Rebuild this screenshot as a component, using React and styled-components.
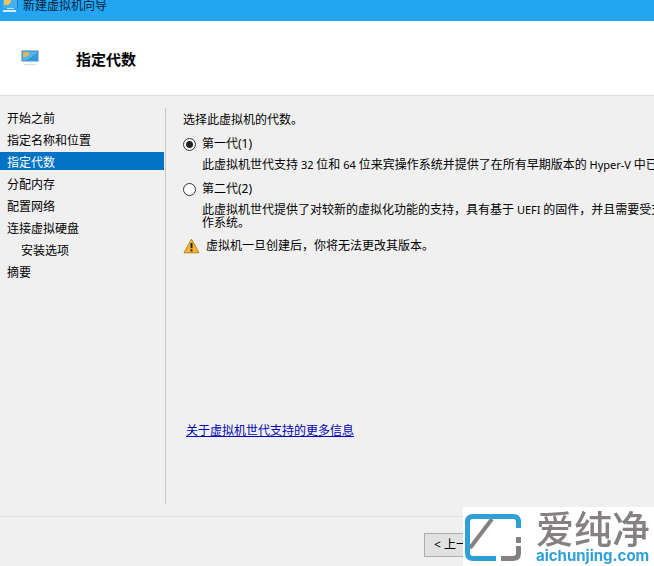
import { useState } from 'react'
import styled, { createGlobalStyle } from 'styled-components'

const GlobalStyle = createGlobalStyle`
  * {
    box-sizing: border-box;
  }
  body {
    margin: 0;
    background: #f0f0f0;
    color: #000;
    font-family: 'Noto Sans', 'Noto Sans CJK SC', sans-serif;
    font-size: 12px;
    line-height: 18px;
  }
`

const Wizard = styled.div`
  display: flex;
  flex-direction: column;
  min-height: 100vh;
  overflow: hidden;
`

const TitleBar = styled.div`
  display: flex;
  align-items: flex-start;
  gap: 4px;
  height: 21px;
  padding-left: 2px;
  overflow: hidden;
  background: #23a5f2;
  color: #06233c;
  line-height: 12px;
  svg {
    flex: none;
  }
`

const Header = styled.header`
  display: flex;
  align-items: center;
  gap: 37px;
  height: 75px;
  padding-left: 21px;
  background: #fff;
  border-bottom: 1px solid #dcdcdc;
  h1 {
    margin: 0;
    padding-top: 2px;
    font-size: 15px;
    line-height: 22px;
    font-weight: 700;
  }
`

const Body = styled.div`
  display: flex;
  flex: 1;
  padding: 12px 0;
`

const Steps = styled.nav`
  flex: none;
  width: 166px;
  padding-right: 1px;
  border-right: 1px solid #c6c6c6;
  ul {
    display: grid;
    gap: 4px;
    margin: 0;
    padding: 0;
    list-style: none;
  }
`

const Step = styled.a`
  display: block;
  padding-top: 4px;
  padding-left: ${props => (props.$nested ? 21 : 7)}px;
  background: ${props => (props.$current ? '#0173c2' : 'transparent')};
  color: ${props => (props.$current ? '#fff' : '#000')};
  line-height: 14px;
  text-decoration: none;
`

const Content = styled.main`
  display: flex;
  flex-direction: column;
  flex: 1;
  min-width: 0;
  padding: 3px 0 64px 17px;
  p {
    margin: 0;
  }
`

const Option = styled.div`
  display: grid;
  grid-template-columns: 13px 1fr;
  column-gap: 6px;
  align-items: center;
  padding: 6px 0 3px;
`

const Radio = styled.input`
  appearance: none;
  width: 13px;
  height: 13px;
  margin: 0;
  border: 1px solid #333;
  border-radius: 50%;
  background: #fff;
  &:checked {
    background: radial-gradient(circle, #222 3px, #fff 4px);
  }
`

const Description = styled.p`
  grid-column: 2;
  padding-top: 5px;
  line-height: 13px;
  white-space: nowrap;
`

const Latin = styled.span`
  font-size: 11px;
`

const Warning = styled.div`
  display: flex;
  align-items: center;
  gap: 6px;
  padding-top: 5px;
`

const MoreLink = styled.a`
  align-self: flex-start;
  margin-top: auto;
  margin-left: 3px;
  color: #0000b4;
`

const Footer = styled.footer`
  display: flex;
  justify-content: flex-end;
  height: 50px;
  padding: 16px 155px 0 0;
  border-top: 1px solid #dfdfdf;
`

const Button = styled.button`
  width: 75px;
  height: 24px;
  padding: 0 9px;
  border: 1px solid #adadad;
  background: #e1e1e1;
  color: #000;
  font: inherit;
  text-align: left;
`

const Watermark = styled.div`
  position: fixed;
  right: 0;
  bottom: 0;
  display: flex;
  gap: 13px;
  width: 191px;
  height: 59px;
  padding: 4px 0 0 2px;
  background: #fff;
  svg {
    flex: none;
    margin-top: 3px;
  }
`

const Brand = styled.div`
  color: #858180;
  font-size: 38px;
  line-height: 34px;
  font-weight: 500;
  white-space: nowrap;
`

const Domain = styled.div`
  padding-top: 3px;
  color: #2f9fd8;
  font-family: Inter, sans-serif;
  font-size: 15px;
  line-height: 16px;
  font-weight: 700;
`

const MonitorIcon = () => (
  <svg width='18' height='16' viewBox='0 0 18 16' aria-hidden='true'>
    <rect x='1' y='1' width='16' height='10' fill='#56b4ea' stroke='#4a86ad' />
    <path d='M5 10.5 L16.5 3 V10.5 Z' fill='#2d9be0' />
    <path d='M2 2 H8 V5 L5 7 H2 Z' fill='#d9b765' />
    <path d='M3 14.5 H15' stroke='#d5dce2' />
  </svg>
)

const TitleIcon = () => (
  <svg width='17' height='14' viewBox='0 0 17 14' aria-hidden='true'>
    <path d='M1 0 H15 V8 H1 Z' fill='#45b0ee' />
    <path d='M15.5 0 V8' stroke='#1b7cc0' />
    <path d='M2 0 H9 V2 L6 5 H2 Z' fill='#f0c45c' />
    <path d='M5 8.5 H12' stroke='#bfe0f5' />
    <path d='M1 11 H14' stroke='#d4ecfa' strokeWidth='2' />
  </svg>
)

const WarningIcon = () => (
  <svg width='17' height='16' viewBox='0 0 17 16' aria-hidden='true'>
    <path d='M8.5 1.2 L16 14.8 H1 Z' fill='#f8b52e' stroke='#b98022' strokeLinejoin='round' />
    <path d='M8.5 5 V10.2' stroke='#222' strokeWidth='2' />
    <path d='M8.5 11.4 V13.4' stroke='#222' strokeWidth='2' />
  </svg>
)

const BrandMark = () => (
  <svg width='58' height='49' viewBox='0 0 58 49' fill='none' aria-hidden='true'>
    <path d='M5 34 L27 5' stroke='#858180' strokeWidth='4' />
    <path d='M31 44.5 H8 Q2.5 44.5 2.5 39 V8 Q2.5 2.5 8 2.5 H48 Q53.5 2.5 53.5 8 V14' stroke='#2f9fd8' strokeWidth='5' />
    <path d='M53.5 23 V29 M53.5 32 V39 Q53.5 44.5 48 44.5 H36' stroke='#858180' strokeWidth='5' />
  </svg>
)

const steps = [
  { label: '开始之前' },
  { label: '指定名称和位置' },
  { label: '指定代数', current: true },
  { label: '分配内存' },
  { label: '配置网络' },
  { label: '连接虚拟硬盘' },
  { label: '安装选项', nested: true },
  { label: '摘要' },
]

const App = () => {
  const [generation, setGeneration] = useState(1)

  return (
    <Wizard>
      <GlobalStyle />
      <TitleBar>
        <TitleIcon />
        <span>新建虚拟机向导</span>
      </TitleBar>
      <Header>
        <MonitorIcon />
        <h1>指定代数</h1>
      </Header>
      <Body>
        <Steps>
          <ul>
            {steps.map(step => (
              <li key={step.label}>
                <Step href='#' $current={step.current} $nested={step.nested}>
                  {step.label}
                </Step>
              </li>
            ))}
          </ul>
        </Steps>
        <Content>
          <p>选择此虚拟机的代数。</p>
          <Option>
            <Radio
              type='radio'
              id='gen1'
              name='generation'
              checked={generation === 1}
              onChange={() => setGeneration(1)}
            />
            <label htmlFor='gen1'>第一代(1)</label>
            <Description>
              此虚拟机世代支持<Latin> 32 </Latin>位和<Latin> 64 </Latin>
              位来宾操作系统并提供了在所有早期版本的<Latin> Hyper-V </Latin>中已
            </Description>
          </Option>
          <Option>
            <Radio
              type='radio'
              id='gen2'
              name='generation'
              checked={generation === 2}
              onChange={() => setGeneration(2)}
            />
            <label htmlFor='gen2'>第二代(2)</label>
            <Description>
              此虚拟机世代提供了对较新的虚拟化功能的支持，具有基于<Latin> UEFI </Latin>
              的固件，并且需要受支
              <br />
              作系统。
            </Description>
          </Option>
          <Warning>
            <WarningIcon />
            <span>虚拟机一旦创建后，你将无法更改其版本。</span>
          </Warning>
          <MoreLink href='#'>关于虚拟机世代支持的更多信息</MoreLink>
        </Content>
      </Body>
      <Footer>
        <Button type='button'>&lt; 上一</Button>
      </Footer>
      <Watermark>
        <BrandMark />
        <div>
          <Brand>爱纯净</Brand>
          <Domain>aichunjing.com</Domain>
        </div>
      </Watermark>
    </Wizard>
  )
}

export default App
